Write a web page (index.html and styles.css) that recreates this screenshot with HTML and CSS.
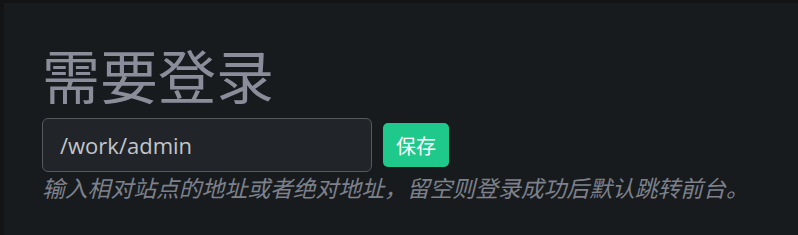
FILE: index.html
```html
<!DOCTYPE html>
<html lang="zh-CN">
<head>
  <meta charset="UTF-8">
  <meta name="viewport" content="width=device-width, initial-scale=1.0">
  <title>需要登录</title>
  <link rel="stylesheet" href="styles.css">
</head>
<body>
  <div class="panel">
    <h1 class="title">需要登录</h1>
    <div class="field-row">
      <input type="text" class="path-input" value="/work/admin">
      <button class="save-btn">保存</button>
    </div>
    <p class="help">输入相对站点的地址或者绝对地址，留空则登录成功后默认跳转前台。</p>
  </div>
</body>
</html>
```

FILE: styles.css
```css
body {
  margin: 0;
  padding: 3px 0 0 4px;
  background: #131416;
  font-family: "Noto Sans", "Noto Sans CJK SC", sans-serif;
  height: 232px;
  overflow: hidden;
}

.panel {
  background: #181b1e;
  height: 100%;
  padding: 33px 0 0 38px;
  box-sizing: border-box;
}

.title {
  margin: 0;
  font-family: "Noto Sans CJK SC", sans-serif;
  font-weight: 400;
  font-size: 58px;
  line-height: 76px;
  color: #8b8d9a;
}

.field-row {
  display: flex;
  align-items: center;
  gap: 11px;
  margin-top: 6px;
}

.path-input {
  width: 330px;
  height: 54px;
  box-sizing: border-box;
  padding: 0 17px;
  background: #212429;
  border: 1px solid #55585d;
  border-radius: 6px;
  color: #c3c6cb;
  font-family: "Open Sans", "Noto Sans CJK SC", sans-serif;
  font-size: 22px;
  outline: none;
}

.save-btn {
  height: 44px;
  padding: 0 13px;
  background: #1fc98b;
  border: none;
  border-radius: 5px;
  color: #fff;
  font-family: "Noto Sans CJK SC", sans-serif;
  font-size: 20px;
}

.help {
  margin: 1px 0 0;
  font-family: "Noto Sans CJK SC", sans-serif;
  font-style: italic;
  font-size: 22.8px;
  line-height: 30px;
  color: #7e818b;
}
```
